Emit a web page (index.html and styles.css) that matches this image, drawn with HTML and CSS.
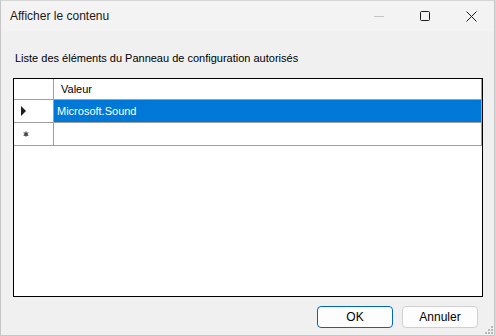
FILE: index.html
```html
<!DOCTYPE html>
<html lang="fr">
<head>
    <meta charset="UTF-8">
    <title>Afficher le contenu</title>
    <link rel="stylesheet" href="styles.css">
</head>
<body>
    <div class="window">
        <div class="titlebar">
            <span class="title">Afficher le contenu</span>
            <div class="controls">
                <span class="ctl min"><svg width="10" height="10" viewBox="0 0 10 10"><path d="M0 5.5h10" stroke="#c4c4c4" stroke-width="1"/></svg></span>
                <span class="ctl"><svg width="10" height="10" viewBox="0 0 10 10"><rect x="0.5" y="0.5" width="9" height="9" rx="1" fill="none" stroke="#1a1a1a" stroke-width="1"/></svg></span>
                <span class="ctl"><svg width="11" height="11" viewBox="0 0 11 11"><path d="M0.5 0.5l10 10M10.5 0.5l-10 10" stroke="#1a1a1a" stroke-width="1"/></svg></span>
            </div>
        </div>
        <div class="content">
            <div class="label">Liste des éléments du Panneau de configuration autorisés</div>
            <div class="grid">
                <div class="row head">
                    <div class="rh"></div>
                    <div class="cell">Valeur</div>
                </div>
                <div class="row selected">
                    <div class="rh"><svg width="6" height="10" viewBox="0 0 6 10"><path d="M0 0l5 5-5 5z" fill="#1e1e1e"/></svg></div>
                    <div class="cell">Microsoft.Sound</div>
                </div>
                <div class="row">
                    <div class="rh new"><svg width="6" height="6" viewBox="0 0 6 6"><path d="M3 0.3v5.4M0.6 1.6l4.8 2.8M0.6 4.4l4.8-2.8" stroke="#666" stroke-width="1.1"/><circle cx="3" cy="3" r="1.6" fill="#444"/></svg></div>
                    <div class="cell"></div>
                </div>
            </div>
            <div class="buttons">
                <button class="btn default">OK</button>
                <button class="btn">Annuler</button>
            </div>
            <svg class="grip" width="8" height="8" viewBox="0 0 8 8">
                <rect x="6" y="0" width="2" height="2" fill="#b8b8b8"/>
                <rect x="3" y="3" width="2" height="2" fill="#b8b8b8"/>
                <rect x="6" y="3" width="2" height="2" fill="#b8b8b8"/>
                <rect x="0" y="6" width="2" height="2" fill="#b8b8b8"/>
                <rect x="3" y="6" width="2" height="2" fill="#b8b8b8"/>
                <rect x="6" y="6" width="2" height="2" fill="#b8b8b8"/>
            </svg>
        </div>
    </div>
</body>
</html>
```

FILE: styles.css
```css
body {
    margin: 0;
    background: #d8d8d8;
    font-family: "Liberation Sans", Arial, sans-serif;
    color: #000;
}
.window {
    width: 495px;
    height: 336px;
    box-sizing: border-box;
    border: 1px solid #c6c6c6;
    border-top-color: #d6d6d6;
    display: flex;
    flex-direction: column;
    background: #f0f0f0;
}
.titlebar {
    height: 30px;
    background: #f3f3f3;
    display: flex;
    align-items: center;
    padding-left: 9px;
}
.title {
    font-size: 12px;
    color: #1a1a1a;
    flex: 1;
    padding-bottom: 1px;
}
.controls {
    display: flex;
    height: 100%;
}
.ctl {
    width: 46px;
    display: flex;
    align-items: center;
    justify-content: center;
}
.content {
    flex: 1;
    position: relative;
    padding: 20px 0 0 12px;
}
.label {
    font-size: 11px;
    height: 15px;
    line-height: 15px;
    margin-left: 2px;
}
.grid {
    margin-top: 12px;
    width: 470px;
    height: 219px;
    box-sizing: border-box;
    border: 1px solid #000;
    background: #fff;
}
.row {
    display: flex;
    height: 22px;
    border-bottom: 1px solid #a0a0a0;
    font-size: 11px;
}
.row.head {
    height: 20px;
}
.rh {
    width: 40px;
    border-right: 1px solid #a0a0a0;
    display: flex;
    align-items: center;
    padding-left: 7px;
    box-sizing: border-box;
}
.rh.new {
    padding-left: 9px;
}
.cell {
    flex: 1;
    display: flex;
    align-items: center;
    padding-left: 3px;
    border-right: 1px solid #a0a0a0;
}
.head .cell {
    padding-left: 7px;
}
.selected .cell {
    background: #0078d7;
    color: #fff;
}
.buttons {
    display: flex;
    justify-content: flex-end;
    gap: 9px;
    margin: 9px 16px 0 0;
}
.btn {
    height: 22px;
    width: 76px;
    font-family: "Liberation Sans", Arial, sans-serif;
    font-size: 12px;
    background: #fdfdfd;
    border: 1px solid #d0d0d0;
    border-radius: 4px;
    color: #000;
    padding: 0;
}
.btn.default {
    border-color: #0067c0;
}
.grip {
    position: absolute;
    right: 1px;
    bottom: 1px;
}
```
